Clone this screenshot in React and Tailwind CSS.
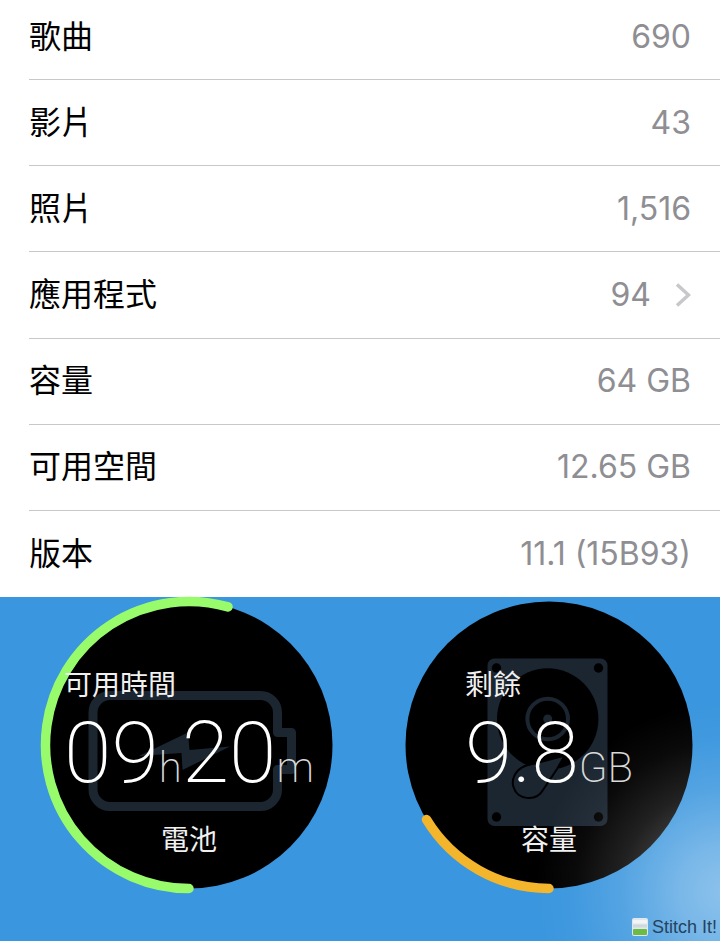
import React from 'react';

const infoRows = [
  { label: '歌曲', value: '690' },
  { label: '影片', value: '43' },
  { label: '照片', value: '1,516' },
  { label: '應用程式', value: '94', href: '#apps' },
  { label: '容量', value: '64 GB' },
  { label: '可用空間', value: '12.65 GB' },
  { label: '版本', value: '11.1 (15B93)' },
];

function InfoRow({ label, value, href }) {
  return (
    <div className="flex items-center justify-between border-b border-[#c8c7cc] pr-[29px] last:border-b-0">
      <dt className="text-black">{label}</dt>
      <dd className="text-[#8e8e93]">
        {href ? (
          <a href={href} className="flex items-center gap-6" aria-label={`${label} ${value}`}>
            {value}
            <svg className="h-6 w-4" viewBox="0 0 16 24" fill="none" stroke="#c7c7cc" strokeWidth="3.5">
              <path d="M2 1.5 13.5 12 2 22.5" />
            </svg>
          </a>
        ) : (
          value
        )}
      </dd>
    </div>
  );
}

function BatteryArt() {
  return (
    <g>
      <path
        d="M69 98.5H219.5a17 17 0 0 1 17 17V135.5H250.5V172.5H236.5V192.5a17 17 0 0 1-17 17H69a17 17 0 0 1-17-17V115.5a17 17 0 0 1 17-17Z"
        fill="none"
        stroke="#1b2631"
        strokeWidth="9"
        strokeLinejoin="round"
      />
      <path d="M98 159 147 135.5 148.5 153 189 149.5 141.5 173 140.5 156Z" fill="#1b2631" />
    </g>
  );
}

function DriveArt() {
  return (
    <g>
      <rect x="86.5" y="61.5" width="120" height="167.5" rx="7" fill="#1b2631" />
      <circle cx="95.5" cy="71" r="4.7" />
      <circle cx="197.5" cy="71" r="4.7" />
      <circle cx="95.5" cy="220" r="4.7" />
      <circle cx="197.5" cy="220" r="4.7" />
      <circle cx="146.7" cy="122" r="50.7" />
      <circle cx="146.7" cy="122" r="20.3" fill="none" stroke="#1b2631" strokeWidth="4" />
      <circle cx="146.7" cy="122" r="4.5" fill="#1b2631" />
      <path
        d="M164 158 C154 162 134 166 124 169 C114 173 110 183 112.500 190 C116 203 135 205 142 193 L156 172Z"
        fill="#1b2631"
        stroke="#000"
        strokeWidth="2"
      />
    </g>
  );
}

function Gauge({ caption, name, color, arc, art, children }) {
  return (
    <div className="grid justify-center pl-[18px]">
      <svg className="col-start-1 row-start-1 h-[296px] w-[296px] overflow-visible" viewBox="0 0 296 296" aria-hidden="true">
        <circle cx="148" cy="148" r="143.5" />
        {art}
        <path d={arc} fill="none" stroke={color} strokeWidth="9.500" strokeLinecap="round" />
      </svg>
      <div className="col-start-1 row-start-1 flex flex-col items-center pt-[72px] text-[#f0f0f0]">
        <div className="w-fit">
          <p className="text-[28px] leading-8">{caption}</p>
          <p className="font-['Roboto',sans-serif] text-[86px] leading-[104px] font-extralight whitespace-nowrap text-white">
            {children}
          </p>
        </div>
        <h2 className="mt-1 text-[28px] leading-8">{name}</h2>
      </div>
    </div>
  );
}

function Unit({ children }) {
  return <span className="text-[42px] text-[#d8d8d8]">{children}</span>;
}

export default function App() {
  return (
    <main
      lang="zh-Hant"
      className="flex min-h-screen flex-col overflow-hidden bg-white font-['Inter','Noto_Sans_CJK_TC',sans-serif] antialiased"
    >
      {/* Device info, the list is scrolled a few pixels past its top */}
      <dl className="-mt-[6px] grid h-[603px] auto-rows-fr pl-[29px] text-[32px] leading-10">
        {infoRows.map((row) => (
          <InfoRow key={row.label} {...row} />
        ))}
      </dl>

      {/* Battery and storage gauges */}
      <section className="relative flex flex-1 flex-col justify-between bg-[#3a96de]">
        <div className="grid grid-cols-2">
          <Gauge
            caption="可用時間"
            name="電池"
            color="#98fb6c"
            arc="M148 291.500 A143.500 143.500 0 1 1 187 9.900"
            art={<BatteryArt />}
          >
            09<Unit>h</Unit>20<Unit>m</Unit>
          </Gauge>
          <Gauge
            caption="剩餘"
            name="容量"
            color="#f3b52b"
            arc="M148 291.500 A143.500 143.500 0 0 1 25.500 222.500"
            art={<DriveArt />}
          >
            9.8<Unit>GB</Unit>
          </Gauge>
        </div>

        {/* Soft light in the bottom right corner */}
        <div className="pointer-events-none absolute inset-0 bg-[radial-gradient(circle_at_calc(100%+5px)_295px,rgba(255,255,255,0.42),rgba(255,255,255,0.32)_45px,rgba(255,255,255,0.13)_105px,rgba(255,255,255,0.04)_150px,rgba(255,255,255,0)_190px)]" />

        <footer className="relative flex items-center justify-end gap-1 pr-[3px] font-['Liberation_Sans',sans-serif] text-[18px] leading-7 text-[#26425c]">
          <svg className="h-[18px] w-4" viewBox="0 0 16 18" aria-hidden="true">
            <rect width="16" height="18" rx="2" fill="#dfe8ee" />
            <rect x="1" y="2" width="14" height="3.500" rx="1" fill="#f4f4f2" />
            <rect x="1" y="6.500" width="14" height="3" fill="#cfd8dc" />
            <rect x="1" y="11" width="14" height="6" rx="1" fill="#6cbb45" />
          </svg>
          Stitch It!
        </footer>
      </section>
    </main>
  );
}
